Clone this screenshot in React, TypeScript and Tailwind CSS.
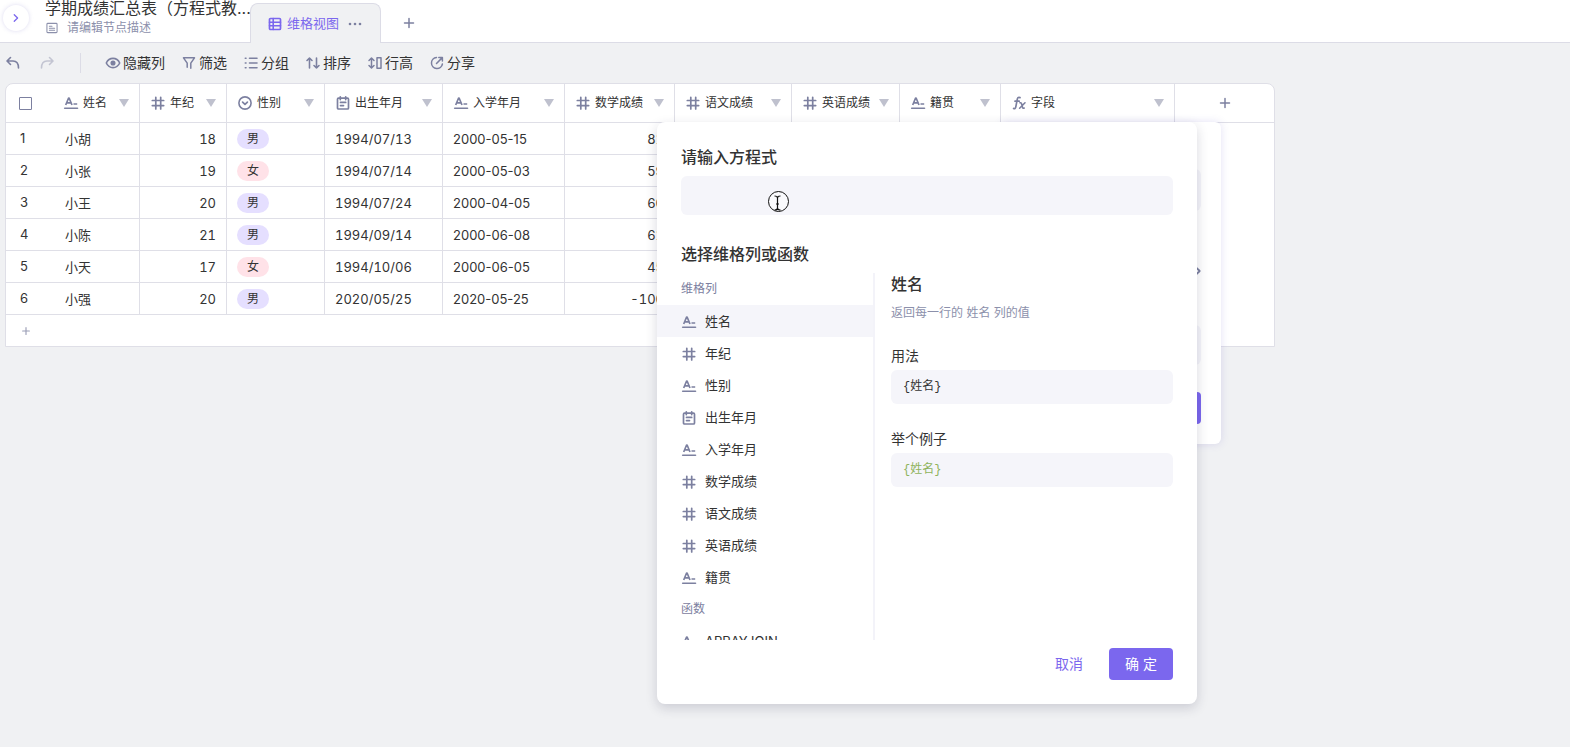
import type { ReactNode } from "react";

type FieldType = "text" | "number" | "select" | "date" | "formula";

interface Field {
  name: string;
  type: FieldType;
  width: string;
}

const fields: Field[] = [
  { name: "姓名", type: "text", width: "w-[87px]" },
  { name: "年纪", type: "number", width: "w-[87px]" },
  { name: "性别", type: "select", width: "w-[98px]" },
  { name: "出生年月", type: "date", width: "w-[118px]" },
  { name: "入学年月", type: "text", width: "w-[122px]" },
  { name: "数学成绩", type: "number", width: "w-[110px]" },
  { name: "语文成绩", type: "number", width: "w-[117px]" },
  { name: "英语成绩", type: "number", width: "w-[108px]" },
  { name: "籍贯", type: "text", width: "w-[101px]" },
  { name: "字段", type: "formula", width: "w-[174px]" },
];

const cellStyles: Record<FieldType, string> = {
  text: "pt-0.5 pl-[10px] text-left",
  number: "pt-0.5 pr-[10px] text-right tabular-nums",
  select: "pt-0 pl-[10px]",
  date: "pt-0.5 pl-[10px] text-left tabular-nums",
  formula: "pt-0.5 pl-[10px] text-left",
};

const rows = [
  ["小胡", "18", "男", "1994/07/13", "2000-05-15", "81", "", "", "", ""],
  ["小张", "19", "女", "1994/07/14", "2000-05-03", "59", "", "", "", ""],
  ["小王", "20", "男", "1994/07/24", "2000-04-05", "60", "", "", "", ""],
  ["小陈", "21", "男", "1994/09/14", "2000-06-08", "61", "", "", "", ""],
  ["小天", "17", "女", "1994/10/06", "2000-06-05", "45", "", "", "", ""],
  ["小强", "20", "男", "2020/05/25", "2020-05-25", "-100", "", "", "", ""],
];

const formulaColumns: { name: string; type: FieldType }[] = [
  { name: "姓名", type: "text" },
  { name: "年纪", type: "number" },
  { name: "性别", type: "text" },
  { name: "出生年月", type: "date" },
  { name: "入学年月", type: "text" },
  { name: "数学成绩", type: "number" },
  { name: "语文成绩", type: "number" },
  { name: "英语成绩", type: "number" },
  { name: "籍贯", type: "text" },
];

function Svg({ children, className = "size-4" }: { children: ReactNode; className?: string }) {
  return (
    <svg
      viewBox="0 0 16 16"
      fill="none"
      stroke="currentColor"
      strokeWidth="1.5"
      strokeLinecap="round"
      strokeLinejoin="round"
      aria-hidden="true"
      className={`shrink-0 ${className}`}
    >
      {children}
    </svg>
  );
}

function FieldIcon({ type }: { type: FieldType }) {
  if (type === "number") {
    return (
      <Svg>
        <path d="M5.800 2.300v11.700M10.700 2.300v11.700M2.300 5.500h11.400M2.300 10.600h11.400" strokeWidth="1.700" />
      </Svg>
    );
  }
  if (type === "select") {
    return (
      <Svg>
        <circle cx="8" cy="8" r="6.1" strokeWidth="1.600" />
        <path d="M5.600 7.100 8 9.400l2.400-2.300" strokeWidth="1.700" />
      </Svg>
    );
  }
  if (type === "date") {
    return (
      <Svg>
        <rect x="2.500" y="3.200" width="11" height="10.800" rx="1" strokeWidth="1.700" />
        <path d="M5.300 1.800v2.800M10.700 1.800v2.800M5.500 7.400h5.200M5.500 10.600h3" strokeWidth="1.700" />
      </Svg>
    );
  }
  if (type === "formula") {
    return (
      <Svg>
        <path
          d="M9 2.600C7.200 1.800 6.500 3 6.200 4.600L4.900 11.400C4.600 13.200 3.800 14 2.600 13.500M4 6.200h4.200"
          strokeWidth="1.700"
        />
        <path d="M9 7.800c1.300-.4 1.600.6 2 2.600s.8 3.200 2.200 2.700M14 7.800 8.600 13.200" strokeWidth="1.600" />
      </Svg>
    );
  }
  return (
    <Svg>
      <path d="M2.700 10 5.600 3h.5L9 10M3.800 7.900H8M10.500 9h3.700" strokeLinecap="butt" strokeWidth="1.700" />
      <path d="M1.700 13.300h12.800" strokeWidth="1.600" />
    </Svg>
  );
}

function PlusIcon({ className }: { className?: string }) {
  return (
    <Svg className={className}>
      <path d="M8 3.500v9M3.500 8h9" />
    </Svg>
  );
}

function Header() {
  return (
    <header className="flex h-[43px] border-b border-[#dcdce6] bg-white">
      <div className="w-[45px] pt-[5px] pl-[3px]">
        <button
          aria-label="展开"
          className="flex size-[26px] items-center justify-center rounded-full bg-white text-[#7b67ee] shadow-[0_0_4px_rgba(120,110,200,0.25)]"
        >
          <Svg className="size-3.5">
            <path d="m6 4.200 3.800 3.800L6 11.800" />
          </Svg>
        </button>
      </div>
      <div className="w-[205px]">
        <h1 className="text-base leading-4 whitespace-nowrap text-[#333]">学期成绩汇总表（方程式教...</h1>
        <p className="mt-0.5 flex items-center gap-2 text-xs leading-5 text-[#8c90ab]">
          <Svg className="size-3.5">
            <rect x="2.200" y="2.700" width="11.600" height="10.600" rx="1" strokeWidth="1.200" />
            <path d="M5 6h3M5 8.300h6M5 10.600h6" strokeWidth="1.200" />
          </Svg>
          请编辑节点描述
        </p>
      </div>
      <div className="mt-[3px] -mb-px flex w-[131px] items-center rounded-t-lg border border-b-0 border-[#dcdce6] bg-[#f0f1f3] pl-4">
        <a href="#view" className="flex items-center gap-1 text-[13px] text-[#7b67ee]">
          <Svg>
            <rect x="2.500" y="2.500" width="11" height="11" rx="1" strokeWidth="1.700" />
            <path d="M6.200 2.500v11M2.500 6.200h11M2.500 9.800h11" strokeWidth="1.600" />
          </Svg>
          维格视图
        </a>
        <button aria-label="更多" className="ml-2 text-[#7c80a0]">
          <Svg>
            <g fill="currentColor" stroke="none">
              <circle cx="3" cy="8" r="1.300" />
              <circle cx="8" cy="8" r="1.300" />
              <circle cx="13" cy="8" r="1.300" />
            </g>
          </Svg>
        </button>
      </div>
      <button aria-label="添加视图" className="ml-5 pt-[3px] text-[#7c80a0]">
        <PlusIcon />
      </button>
    </header>
  );
}

function ToolButton({ label, children }: { label: string; children: ReactNode }) {
  return (
    <button className="flex items-center gap-0.5 text-sm text-[#333]">
      <span className="text-[#7c80a0]">
        <Svg>{children}</Svg>
      </span>
      {label}
    </button>
  );
}

function Toolbar() {
  return (
    <div className="flex h-10 items-center pl-[5px]">
      <button aria-label="撤销" className="text-[#7c80a0]">
        <Svg>
          <path d="M5.500 2.500 2 6l3.500 3.500M2.200 6H8c3.500 0 5.500 2.500 5.500 7" strokeWidth="1.600" />
        </Svg>
      </button>
      <button aria-label="重做" className="ml-[18px] text-[#c3c5d2]">
        <Svg>
          <path d="M10.500 2.500 14 6l-3.500 3.500M13.800 6H8c-3.500 0-5.500 2.500-5.500 7" strokeWidth="1.600" />
        </Svg>
      </button>
      <div className="mr-6 ml-[25px] h-5 w-px bg-[#dcdce6]" />
      <div className="flex items-center gap-4">
        <ToolButton label="隐藏列">
          <path
            d="M1.300 8C2.800 4.800 5.200 3.400 8 3.400s5.200 1.400 6.700 4.600c-1.500 3.200-3.900 4.600-6.700 4.600S2.800 11.200 1.300 8Z"
            strokeWidth="1.600"
          />
          <circle cx="8" cy="8" r="1.800" fill="currentColor" />
        </ToolButton>
        <ToolButton label="筛选">
          <path d="M9.800 13.300V8.200l3.700-5.400H2.500l3.700 5.400v4" />
        </ToolButton>
        <ToolButton label="分组">
          <path d="M6.500 3.300h7.500M6.500 8h7.500M6.500 12.700h7.500M2.300 3.300h.7M2.300 8h.7M2.300 12.700h.7" strokeWidth="1.600" />
        </ToolButton>
        <ToolButton label="排序">
          <path d="M2 5.500 4.500 3 7 5.500M4.500 3v10M9 10.500l2.500 2.500 2.500-2.500M11.500 13V3" strokeWidth="1.600" />
        </ToolButton>
        <ToolButton label="行高">
          <rect x="10" y="2.800" width="4" height="10.400" />
          <path d="M4.500 3.500v9M2 5.500 4.500 3 7 5.500M2 10.500 4.500 13 7 10.500" />
        </ToolButton>
        <ToolButton label="分享">
          <path d="M7.500 2.600A5.500 5.500 0 1 0 13.400 9M7.500 8.500l5.500-5.600M9.800 2.500h3.600V6" />
        </ToolButton>
      </div>
    </div>
  );
}

function Cell({ type, value }: { type: FieldType; value: string }) {
  if (type === "select") {
    return (
      <span
        className={`flex h-5 w-8 items-center justify-center rounded-full text-xs text-[#333] ${
          value === "男" ? "bg-[#e5dfff]" : "bg-[#ffe2e8]"
        }`}
      >
        {value}
      </span>
    );
  }
  return <>{value}</>;
}

function Grid() {
  return (
    <div className="ml-[5px] w-[1270px] overflow-hidden rounded-t-lg border border-[#dfdfe7] bg-white">
      <table className="w-full table-fixed border-separate border-spacing-0 text-[13px] text-[#333]">
        <thead>
          <tr className="h-[39px]">
            <th className="w-[47px] border-b border-[#dfdfe7] p-0 pl-[13px] text-left">
              <input
                type="checkbox"
                aria-label="全选"
                className="block size-[13px] appearance-none rounded-[1px] border border-[#7c80a0] outline-1 -outline-offset-1 outline-[#7c80a0]/40"
              />
            </th>
            {fields.map((field) => (
              <th
                key={field.name}
                className={`${field.width} border-r border-b border-[#dfdfe7] px-[10px] py-0 text-left text-xs font-normal`}
              >
                <div className="flex items-center gap-1 whitespace-nowrap">
                  <span className="text-[#7c80a0]">
                    <FieldIcon type={field.type} />
                  </span>
                  {field.name}
                  <svg viewBox="0 0 10 8" className="ml-auto h-2 w-2.5 shrink-0 fill-[#bfc1ce]" aria-hidden="true">
                    <path d="M0 0h10L5 8Z" />
                  </svg>
                </div>
              </th>
            ))}
            <th className="border-b border-[#dfdfe7] p-0 text-[#7c80a0]">
              <button aria-label="添加列" className="mx-auto block">
                <PlusIcon />
              </button>
            </th>
          </tr>
        </thead>
        <tbody>
          {rows.map((row, index) => (
            <tr key={row[0]} className="h-8">
              <td className="border-b border-[#dfdfe7] p-0 pl-[14px]">{index + 1}</td>
              {row.map((value, i) => (
                <td
                  key={fields[i].name}
                  className={`border-r border-b border-[#dfdfe7] pb-0 first-of-type:pl-0 ${cellStyles[fields[i].type]}`}
                >
                  {i === 0 ? <span className="ml-0.5">{value}</span> : <Cell type={fields[i].type} value={value} />}
                </td>
              ))}
              <td />
            </tr>
          ))}
        </tbody>
      </table>
      <button aria-label="添加行" className="block h-[31px] pl-[14px] text-[#9a9db5]">
        <PlusIcon className="size-3" />
      </button>
    </div>
  );
}

// field settings menu, mostly covered by the formula dialog
function FieldPanel() {
  return (
    <div className="absolute top-[122px] left-[1001px] h-[322px] w-[220px] rounded-md bg-white px-5 pt-[47px] shadow-[0_0_8px_rgba(100,90,200,0.18)]">
      <div className="h-[42px] rounded-md bg-[#f5f5fa]" />
      <div className="mt-[52px] flex justify-end text-[#7c80a0]">
        <Svg>
          <path d="m11.500 4.800 3.200 3.200-3.200 3.200" strokeWidth="1.800" />
        </Svg>
      </div>
      <div className="mt-[46px] h-10 rounded-md bg-[#f5f5fa]" />
      <div className="mt-[27px] ml-auto h-8 w-16 rounded bg-[#7b67ee]" />
    </div>
  );
}

function FunctionItem({ type, name, active }: { type: FieldType; name: string; active?: boolean }) {
  return (
    <li>
      <button
        className={`flex h-8 w-full items-center gap-2 px-6 pt-px text-[13px] text-[#333] ${active ? "bg-[#f5f5fa]" : ""}`}
      >
        <span className="text-[#7c80a0]">
          <FieldIcon type={type} />
        </span>
        {name}
      </button>
    </li>
  );
}

function Snippet({ title, className = "", children }: { title: string; className?: string; children: ReactNode }) {
  return (
    <section>
      <h4 className="text-sm">{title}</h4>
      <div
        className={`mt-1 rounded-md bg-[#f5f5fa] px-3 font-['Liberation_Mono','Noto_Sans_CJK_SC',monospace] text-xs leading-[34px] ${className}`}
      >
        {children}
      </div>
    </section>
  );
}

function FormulaDialog() {
  return (
    <div
      role="dialog"
      aria-label="方程式"
      className="absolute top-[122px] left-[657px] w-[540px] rounded-lg bg-white pt-[23px] pb-6 text-[#333] shadow-[0_4px_12px_rgba(40,40,70,0.18)]"
    >
      <div className="px-6">
        <label htmlFor="formula" className="block text-base font-medium">
          请输入方程式
        </label>
        <input id="formula" className="mt-[7px] block h-[39px] w-full rounded-md bg-[#f5f5fa] px-3 text-sm outline-none" />
        <h2 className="mt-[27px] text-base font-medium">选择维格列或函数</h2>
      </div>

      <div className="mt-[7px] flex h-[367px]">
        <div className="w-[218px] overflow-hidden border-r-2 border-[#f3f3f9]">
          <h3 className="px-6 text-xs leading-8 text-[#7c80a0]">维格列</h3>
          <ul>
            {formulaColumns.map((column, i) => (
              <FunctionItem key={column.name} type={column.type} name={column.name} active={i === 0} />
            ))}
          </ul>
          <h3 className="px-6 text-xs leading-8 text-[#7c80a0]">函数</h3>
          <ul>
            <FunctionItem type="text" name="ARRAYJOIN" />
          </ul>
        </div>
        <div className="flex-1 pr-6 pl-4">
          <h3 className="text-base leading-[22px] font-medium">姓名</h3>
          <p className="mt-2 text-xs leading-5 text-[#8c90ab]">返回每一行的 姓名 列的值</p>
          <div className="mt-[23px] flex flex-col gap-[25px]">
            <Snippet title="用法">{"{姓名}"}</Snippet>
            <Snippet title="举个例子" className="text-[#8fb35c]">
              {"{姓名}"}
            </Snippet>
          </div>
        </div>
      </div>

      <div className="mt-2 flex items-center justify-end gap-[26px] pr-6 text-sm">
        <button className="text-[#7b67ee]">取消</button>
        <button className="h-8 w-16 rounded bg-[#7b67ee] text-white">确 定</button>
      </div>
    </div>
  );
}

function TextCursor() {
  return (
    <svg
      viewBox="0 0 22 22"
      fill="none"
      stroke="#111"
      className="pointer-events-none absolute top-[191px] left-[768px] size-[22px]"
      aria-hidden="true"
    >
      <circle cx="10.500" cy="10.500" r="10" fill="#fff" fillOpacity="0.5" />
      <path
        d="M6.500 5c2 0 3 .5 3 2 0-1.500 1-2 3-2M9.500 7v10M6.500 19c2 0 3-.5 3-2 0 1.500 1 2 3 2M8 13h3"
        strokeWidth="1.200"
      />
    </svg>
  );
}

export default function App() {
  return (
    <div className="relative min-h-screen overflow-hidden bg-[#f0f1f3] font-['Inter','Noto_Sans_CJK_SC',sans-serif]">
      <Header />
      <Toolbar />
      <Grid />
      <FieldPanel />
      <FormulaDialog />
      <TextCursor />
    </div>
  );
}
